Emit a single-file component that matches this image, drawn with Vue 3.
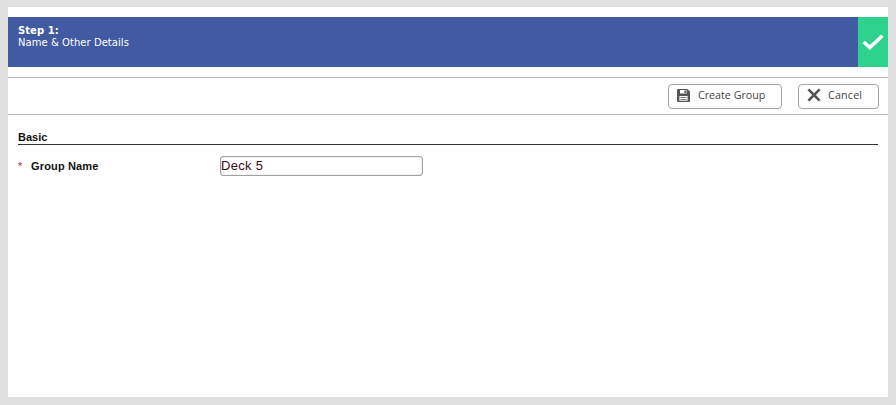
<script setup>
import { ref } from "vue";

const groupName = ref("Deck 5");
</script>

<template>
  <main class="panel">
    <header class="banner">
      <div class="banner-text">
        <strong>Step 1:</strong>
        <span>Name &amp; Other Details</span>
      </div>
      <div class="banner-check">
        <svg width="22" height="16" viewBox="0 0 22 16">
          <path d="M1.6 8 L7.8 13.6 L20.4 1.8" fill="none" stroke="#fff" stroke-width="3.6" />
        </svg>
      </div>
    </header>

    <div class="toolbar">
      <button class="btn btn-create">
        <svg width="13" height="13" viewBox="0 0 13 13">
          <path
            fill-rule="evenodd"
            fill="#555"
            d="M0 1 Q0 0 1 0 H10.4 L13 2.6 V12 Q13 13 12 13 H1 Q0 13 0 12 Z M3 1 V4.6 H9.6 V1 Z M7.4 1.5 V4 H9 V1.5 Z M2.4 7 V11.8 H10.6 V7 Z"
          />
          <path fill="#555" d="M3.4 8.2 H9.6 V9 H3.4 Z M3.4 9.9 H9.6 V10.7 H3.4 Z" />
        </svg>
        Create Group
      </button>
      <button class="btn btn-cancel">
        <svg width="14" height="14" viewBox="0 0 14 14">
          <path d="M1.4 1.4 L12.6 12.6 M12.6 1.4 L1.4 12.6" stroke="#555" stroke-width="2.6" fill="none" />
        </svg>
        Cancel
      </button>
    </div>

    <section class="basic">
      <h3>Basic</h3>
      <div class="field">
        <label><span class="req">*</span>Group Name</label>
        <input v-model="groupName" type="text" />
      </div>
    </section>
  </main>
</template>

<style>
html,
body {
  background: #e0e0e0;
}
</style>

<style scoped>
.panel {
  box-sizing: border-box;
  width: 880px;
  height: 390px;
  margin: 7px 8px 8px;
  padding-top: 10px;
  background: #fff;
  font-family: "Liberation Sans", Arial, sans-serif;
}

.banner {
  display: flex;
  justify-content: space-between;
  height: 50px;
  background: #415aa1;
}

.banner-text {
  display: flex;
  flex-direction: column;
  padding: 8px 10px;
  font-family: "DejaVu Sans", Verdana, sans-serif;
  font-size: 10px;
  letter-spacing: 0.05px;
  line-height: 12px;
  color: #fff;
}

.banner-check {
  display: flex;
  align-items: center;
  justify-content: center;
  width: 30px;
  background: #2dd38d;
}

.toolbar {
  display: flex;
  justify-content: flex-end;
  align-items: center;
  gap: 16px;
  box-sizing: border-box;
  height: 38px;
  margin-top: 10px;
  padding-right: 9px;
  border-top: 1px solid #bdbdbd;
  border-bottom: 1px solid #bdbdbd;
}

.btn {
  display: flex;
  align-items: center;
  box-sizing: border-box;
  height: 25px;
  padding: 0 0 2px 8px;
  background: #fff;
  border: 1px solid #a6a6a6;
  border-radius: 4px;
  font-family: "Open Sans", "Liberation Sans", sans-serif;
  font-size: 10.7px;
  color: #444;
}

.btn-create {
  width: 114px;
  gap: 8px;
}

.btn-cancel {
  width: 81px;
  gap: 7px;
  letter-spacing: 0.2px;
}

.basic {
  padding: 15px 10px 0;
}

h3 {
  margin: 0;
  box-sizing: border-box;
  height: 15px;
  border-bottom: 1px solid #333;
  font-size: 11px;
  font-weight: 700;
  line-height: 15px;
  color: #111;
}

.field {
  display: flex;
  align-items: center;
  margin-top: 11px;
}

label {
  display: flex;
  width: 202px;
  font-size: 11px;
  font-weight: 700;
  letter-spacing: 0.15px;
  color: #111;
}

.req {
  width: 13px;
  font-weight: 400;
  color: #d0203c;
}

input {
  box-sizing: border-box;
  width: 203px;
  height: 20px;
  padding: 0 0 1px;
  border: 1px solid #a0a0a0;
  border-radius: 3px;
  box-shadow: inset 0 0 1px #888;
  outline: none;
  font-family: "Liberation Sans", Arial, sans-serif;
  font-size: 13px;
  letter-spacing: 0.3px;
  color: #3a0a1a;
}
</style>
